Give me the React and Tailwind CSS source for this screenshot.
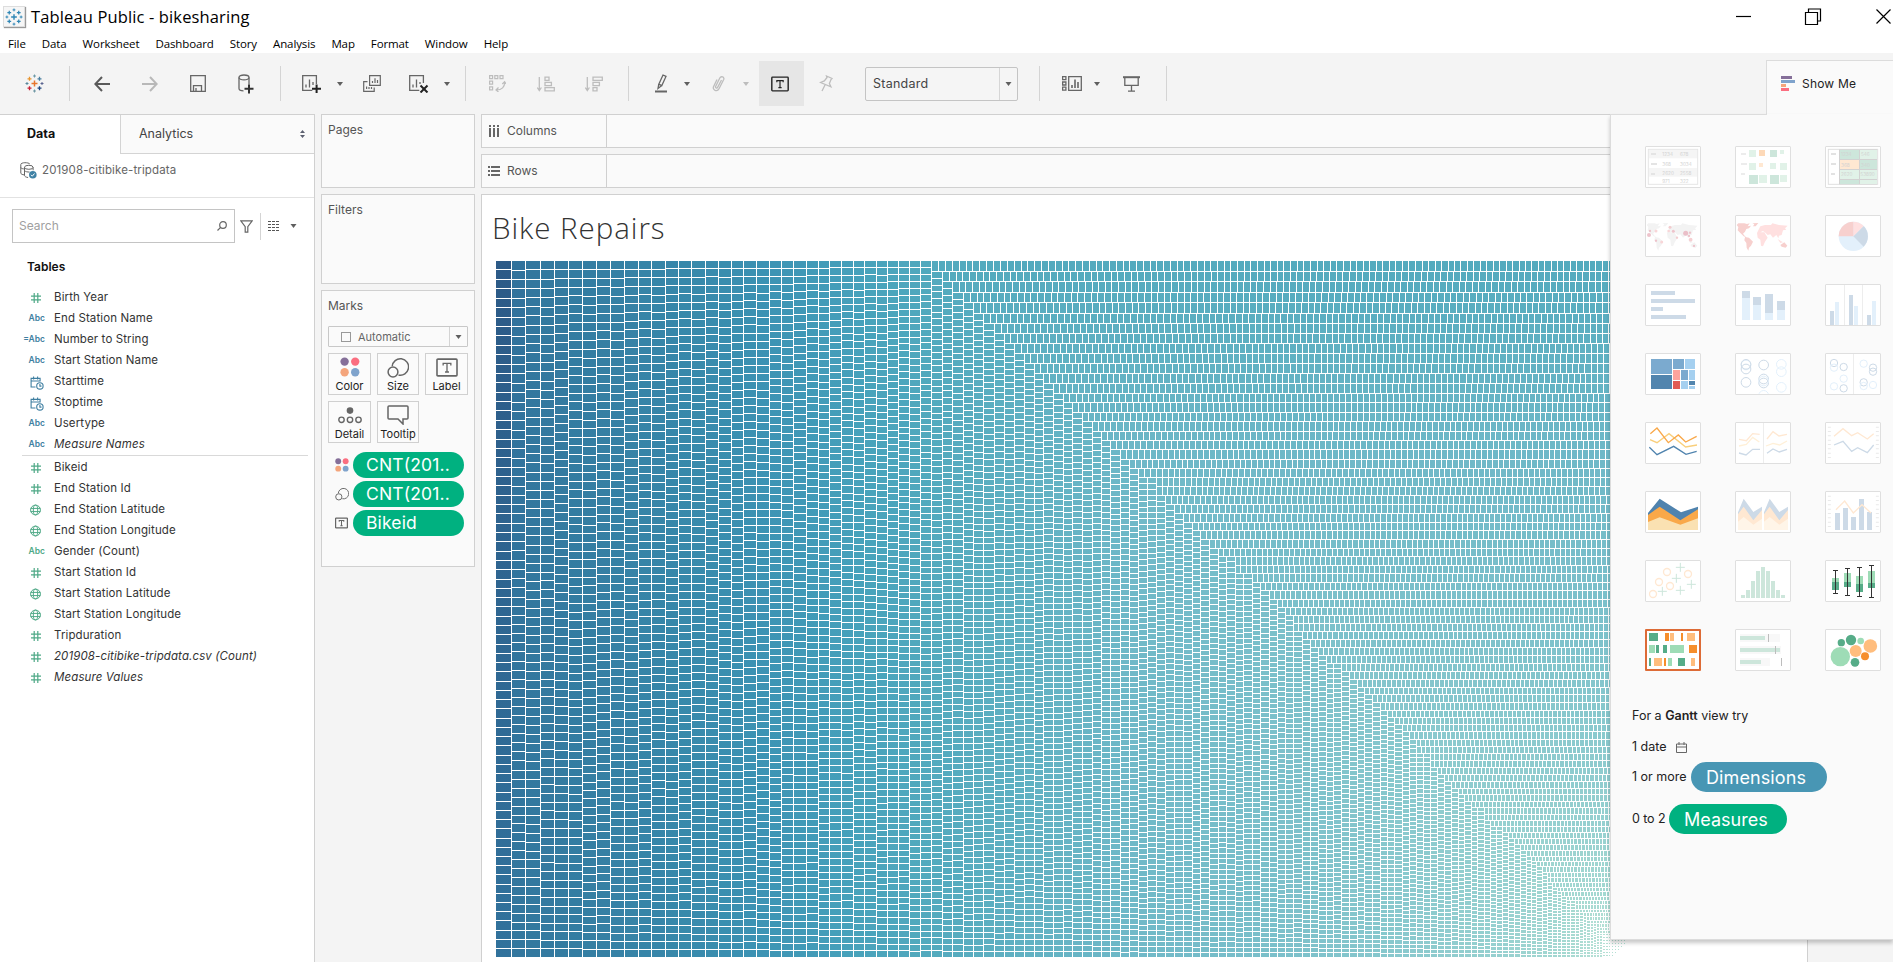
import React from 'react';

/* ---------- treemap ---------- */

const L = 496, T = 261, B = 958, R = 1628;

const fullColumns = [
  496, 512, 526, 541, 555, 569, 583, 597, 611, 625, 639, 652, 666, 679, 692, 706, 719, 732, 744, 757, 770, 782, 794,
  807, 819, 830, 842, 854, 865, 877, 888, 899, 910, 921,
];

// [left, top] of every column that starts below a row
const steps = [
  [932, 272], [943, 282], [953, 293], [964, 303], [974, 314], [984, 324], [995, 334], [1005, 344], [1015, 354],
  [1025, 364], [1035, 374], [1044, 384], [1054, 394], [1064, 403], [1073, 413], [1083, 422], [1093, 432], [1102, 441],
  [1111, 450], [1121, 460], [1130, 469], [1139, 478], [1148, 478], [1157, 496], [1166, 505], [1175, 514], [1184, 523],
  [1193, 531], [1201, 540], [1210, 549], [1219, 557], [1227, 557], [1236, 574], [1244, 574], [1253, 583], [1261, 591],
  [1270, 600], [1278, 608], [1286, 616], [1294, 632], [1303, 640], [1311, 648], [1319, 656], [1327, 664], [1334, 664],
  [1342, 672], [1350, 680], [1358, 688], [1365, 695], [1373, 703], [1381, 711], [1388, 718], [1395, 725], [1403, 732],
  [1410, 740], [1417, 754], [1424, 754], [1431, 768], [1438, 775], [1445, 782], [1452, 789], [1459, 795], [1465, 802],
  [1472, 808], [1478, 808], [1485, 821], [1491, 827], [1497, 827], [1503, 833], [1509, 839], [1515, 845], [1521, 851],
  [1527, 857], [1532, 862], [1537, 867], [1543, 873], [1548, 883], [1553, 888], [1558, 892], [1562, 897], [1567, 901],
  [1571, 901], [1576, 910], [1580, 913], [1584, 917], [1587, 921], [1591, 924], [1594, 924], [1597, 928], [1600, 931],
];

const rowTops = [
  261, 272, 282, 293, 303, 314, 324, 334, 344, 354, 364, 374, 384, 394, 403, 413, 422, 432, 441, 450, 460, 469, 478,
  487, 496, 505, 514, 523, 531, 540, 549, 557, 566, 574, 583, 591, 600, 608, 616, 624, 632, 640, 648, 656, 664, 672,
  680, 688, 695, 703, 711, 718, 725, 732, 740, 747, 754, 761, 768, 775, 782, 789, 795, 802, 808, 815, 821, 827, 833,
  839, 845, 851, 857, 862, 867, 873, 878, 883, 888, 892, 897, 901, 905, 910, 913, 917, 921, 924, 928, 931,
];

const ramp = [
  [496, 44, 90, 135], [512, 49, 114, 156], [526, 51, 119, 158], [570, 52, 124, 161], [680, 55, 136, 170],
  [760, 60, 146, 179], [860, 71, 162, 187], [935, 83, 170, 190], [1040, 98, 178, 195], [1140, 112, 185, 200],
  [1300, 125, 193, 203], [1420, 139, 202, 206], [1510, 152, 209, 208], [1570, 165, 217, 209], [1603, 183, 225, 214],
  [1700, 185, 226, 214],
];

// mean cell pitch along a strip, by the strip's starting position
const pitches = [
  [496, 9.25], [512, 9.15], [560, 8.75], [650, 8.3], [750, 7.85], [850, 7.1], [932, 6.65], [1000, 6.35], [1140, 5.65],
  [1250, 5.2], [1350, 4.75], [1450, 4.2], [1530, 3.5], [1570, 3], [1603, 2.6],
];

function at(table, x) {
  let i = 1;
  while (i < table.length - 1 && table[i][0] < x) i++;
  const a = table[i - 1], b = table[i];
  const f = Math.max(0, Math.min(1, (x - a[0]) / (b[0] - a[0])));
  return a.slice(1).map((v, k) => v + (b[k + 1] - v) * f);
}

function shade(x) {
  return `rgb(${at(ramp, x).map(Math.round).join(',')})`;
}

function cuts(start, end, pos, seed) {
  const len = end - start;
  const n = Math.max(1, Math.round(len / at(pitches, pos)[0]));
  const bow = 0.015 + 0.035 * ((seed * 0.618) % 1);
  const out = [];
  for (let i = 0; i <= n; i++) {
    const t = i / n;
    out.push(Math.round(start + len * (t + bow * t * (1 - t))));
  }
  return out;
}

function buildStrips() {
  const cols = [...fullColumns.map((x) => [x, T]), ...steps];
  const strips = [];
  cols.forEach(([x, top], i) => {
    const next = i < cols.length - 1 ? cols[i + 1][0] : 1603;
    const w = next - x;
    const c = cuts(top, B, x, i);
    let d = '';
    for (let k = 0; k < c.length - 1; k++) {
      const h = c[k + 1] - c[k] - 1;
      if (h > 0) d += `M${x} ${c[k]}h${w - 1}v${h}h${1 - w}z`;
    }
    strips.push({ id: `c${i}`, d, from: shade(x), to: shade(next), x1: 0, y1: top, x2: 0, y2: B });
  });
  rowTops.forEach((y, i) => {
    const next = i < rowTops.length - 1 ? rowTops[i + 1] : 934;
    const first = steps.find((s) => s[1] > y);
    const x = first ? first[0] : 1603;
    const h = next - y;
    const c = cuts(x, R, x, i + 3);
    let d = '';
    for (let k = 0; k < c.length - 1; k++) {
      const w = c[k + 1] - c[k] - 1;
      if (w > 0) d += `M${c[k]} ${y}h${w}v${h - 1}h${-w}z`;
    }
    strips.push({ id: `r${i}`, d, from: shade(x), to: shade(x + h), x1: x, y1: 0, x2: R, y2: 0 });
  });
  let dots = '';
  for (let x = 1603; x < 1627; x += 3) {
    for (let y = 934; y < 957; y += 3) {
      if (x - 1603 + (y - 934) < 32) dots += `M${x} ${y}h${x < 1609 ? 2 : 1}v1h${x < 1609 ? -2 : -1}z`;
    }
  }
  return { strips, dots };
}

const map = buildStrips();

function Treemap() {
  return (
    <svg width="1132" height="697" viewBox={`${L} ${T} 1132 697`} shapeRendering="crispEdges" className="block shrink-0">
      <defs>
        {map.strips.map((s) => (
          <linearGradient key={s.id} id={s.id} gradientUnits="userSpaceOnUse" x1={s.x1} y1={s.y1} x2={s.x2} y2={s.y2}>
            <stop offset="0" stopColor={s.from} />
            <stop offset="1" stopColor={s.to} />
          </linearGradient>
        ))}
      </defs>
      {map.strips.map((s) => (
        <path key={s.id} d={s.d} fill={`url(#${s.id})`} />
      ))}
      <path d={map.dots} fill="#b4e0d4" />
    </svg>
  );
}

/* ---------- icons ---------- */

function Svg({ w, h, children, className = '', stroke = '#666', sw = 1.3 }) {
  return (
    <svg width={w} height={h} viewBox={`0 0 ${w} ${h}`} fill="none" stroke={stroke} strokeWidth={sw} className={`block shrink-0 ${className}`}>
      {children}
    </svg>
  );
}

const plus = (x, y, r) => `M${x - r} ${y}h${2 * r}M${x} ${y - r}v${2 * r}`;

function Logo({ mono, size = 19 }) {
  const c = mono ? Array(8).fill('#2f86b5') : ['#e8952f', '#6c9aa8', '#4a7fa0', '#c72035', '#1f457e', '#5b6591', '#7199a6', '#59879b'];
  return (
    <svg width={size} height={size} viewBox="0 0 19 19" fill="none" strokeWidth="1.3" className="block shrink-0">
      <path d={plus(9.5, 9.5, 3)} stroke={mono ? '#2f86b5' : '#e8762d'} strokeWidth="1.5" />
      <path d={plus(4.5, 4.8, 2)} stroke={c[0]} />
      <path d={plus(14.5, 4.8, 2)} stroke={c[2]} />
      <path d={plus(4.5, 14.2, 2)} stroke={c[3]} />
      <path d={plus(14.5, 14.2, 2)} stroke={c[4]} />
      <path d={plus(9.5, 2, 1.5)} stroke={c[1]} strokeWidth="1" />
      <path d={plus(9.5, 17, 1.5)} stroke={c[6]} strokeWidth="1" />
      <path d={plus(2, 9.5, 1.5)} stroke={c[7]} strokeWidth="1" />
      <path d={plus(17, 9.5, 1.5)} stroke={c[5]} strokeWidth="1" />
    </svg>
  );
}

function Caret({ className = '', color = '#5f5f5f', w = 6, h = 4 }) {
  return (
    <svg width={w} height={h} viewBox="0 0 6 4" className={`block shrink-0 ${className}`}>
      <path d="M0 0h6L3 4z" fill={color} />
    </svg>
  );
}

function Sep({ className }) {
  return <div className={`h-[35px] w-px shrink-0 bg-[#d4d4d4] ${className}`} />;
}

function TGlyph({ w, h, color = '#555', sw = 1.3 }) {
  return (
    <svg width={w} height={h} viewBox="0 0 20 17" fill="none" stroke={color} strokeWidth={sw} className="block shrink-0">
      <rect x="0.9" y="0.9" width="18.2" height="15.2" rx="0.8" strokeWidth={sw * 1.2} />
      <path d="M6.5 6.6V4.7h7v1.9M10 4.7v8M8.2 12.6h3.6" />
    </svg>
  );
}

function SizeGlyph({ w, h }) {
  return (
    <svg width={w} height={h} viewBox="0 0 22 21" fill="none" stroke="#666" strokeWidth="1.5" className="block shrink-0">
      <path d="M5.2 9.3a8.2 8.2 0 1 1 6.3 8.6" />
      <circle cx="6" cy="15" r="4.9" />
    </svg>
  );
}

function ColorGlyph({ w, h }) {
  return (
    <svg width={w} height={h} viewBox="0 0 20 20" className="block shrink-0">
      <circle cx="4.6" cy="4.6" r="4.2" fill="#856f99" />
      <circle cx="15.2" cy="4.6" r="4.2" fill="#fb6e80" />
      <circle cx="4.6" cy="15.2" r="4.2" fill="#f4a57c" />
      <circle cx="15.2" cy="15.2" r="4.2" fill="#7fa3cc" />
    </svg>
  );
}

/* ---------- toolbar ---------- */

function Toolbar() {
  const off = '#bdbdbd';
  return (
    <div className="flex h-[61px] items-center bg-[#f4f4f4]">
      <div className="ml-[25px]"><Logo /></div>
      <Sep className="ml-[25px]" />
      <Svg w={16} h={16} className="ml-[24px]" sw={2} stroke="#5a5a5a"><path d="M16 8H1.5M8 1L1.3 8 8 15" /></Svg>
      <Svg w={16} h={16} className="ml-[32px]" sw={2} stroke="#b8b8b8"><path d="M0 8h14.5M8 1l6.7 7L8 15" /></Svg>
      <Svg w={16} h={17} className="ml-[32px]"><path d="M.7.7h14.6v15.6H.7zM3.5 16v-5.4h8V16M6 16v-3" /></Svg>
      <Svg w={16} h={20} className="ml-[32px]">
        <ellipse cx="6" cy="3.4" rx="5" ry="2.4" /><path d="M1 3.4v11.2c0 1.4 2 2.2 4.5 2.2M11 3.4v7.2" />
        <path d="M6.5 14.8h9M11 10.5v9" stroke="#333" strokeWidth="2" />
      </Svg>
      <Sep className="ml-[26px]" />
      <Svg w={20} h={18} className="ml-[21px]">
        <path d="M14.4 9V.7H.7v14.6h9.6M4 12.5V9.5M7.5 12.5V4.5M11 10V7" /><path d="M10 13.8h9M14.6 9.5v8.5" stroke="#222" strokeWidth="2" />
      </Svg>
      <Caret className="ml-[15px]" />
      <Svg w={18} h={18} className="ml-[20px]" sw={1.2}>
        <path d="M6.6.7h10.7v9.6H6.6zM9.5 8V6M12 8V3.2M14.5 8V5M4.5 6.6H.7v9.8h10.5v-4M3.6 14v-2.5M6 14v-2M8.5 14v-2" />
      </Svg>
      <Svg w={20} h={18} className="ml-[28px]">
        <path d="M14.4 8V.7H.7v14.6h9.6M4 12.5V9.5M7.5 12.5V4.5M11 9V7" /><path d="M11.5 10.5l7 7M18.5 10.5l-7 7" stroke="#222" strokeWidth="2" />
      </Svg>
      <Caret className="ml-[15px]" />
      <Sep className="ml-[15px]" />
      <Svg w={17} h={17} className="ml-[23px]" stroke={off} sw={1.2}>
        <path d="M.6.6h3v3h-3zM5.8.6h3v3h-3zM11 .6h3v3h-3zM.6 6.2h3v3h-3zM.6 11.8h3v3h-3zM15.6 7c.4 5-3 8-8 8M13.3 9l2.3-2.3L17 9M9.5 12.5L7 15l2.5 2" />
      </Svg>
      <Svg w={18} h={16} className="ml-[31px]" stroke={off}>
        <path d="M2.3 1v13M.2 11.5l2.1 3 2.1-3M8 1.2h4v3.2H8zM8 6.4h6.4v3.2H8zM8 11.6h9.3v3.2H8z" />
      </Svg>
      <Svg w={18} h={16} className="ml-[30px]" stroke={off}>
        <path d="M2.3 1v13M.2 11.5l2.1 3 2.1-3M8 1.2h9.3v3.2H8zM8 6.4h6.4v3.2H8zM8 11.6h4v3.2H8z" />
      </Svg>
      <Sep className="ml-[25px]" />
      <Svg w={12} h={19} className="ml-[26px]">
        <path d="M8 1l3 1.4-4.2 9.2-3-1.4zM3.8 10.2L3 14.5l3.8-2.9" /><path d="M0 17.5h12" strokeWidth="2" />
      </Svg>
      <Caret className="ml-[17px]" />
      <Svg w={14} h={17} className="ml-[21px]" stroke={off}>
        <path d="M10.5 5L6.6 12.4c-.7 1.4-2.6.4-2-1L8.8 3c1.2-2.4 5-1 3.9 1.6L8 13.8c-1.8 3.4-7 1.4-5.4-2.4L6 4.5" />
      </Svg>
      <Caret className="ml-[18px]" color={off} />
      <div className="ml-[10px] flex h-[45px] w-[45px] shrink-0 items-center justify-center bg-[#e6e6e6] pr-[3px]">
        <TGlyph w={18} h={16} color="#222" sw={1.3} />
      </div>
      <Svg w={15} h={17} className="ml-[15px]" stroke={off}>
        <path d="M7.5 1l5.5 2.4-1 1.2-1.6 4 1.5 3.2L1.5 7.5l3.8-1.6L8 2.5zM6 10l-3 6" />
      </Svg>
      <div className="ml-[31px] flex h-[34px] w-[153px] shrink-0 items-center rounded-[2px] border border-[#c4c4c4] bg-[#f5f5f5]">
        <span className="flex-1 pl-[7px] pt-[2px] text-[12.5px] tracking-[0.25px] text-[#444]">Standard</span>
        <div className="flex h-full w-[18px] items-center justify-center border-l border-[#d6d6d6]"><Caret w={7} /></div>
      </div>
      <Sep className="ml-[21px]" />
      <Svg w={20} h={15} className="ml-[22px]">
        <path d="M.6.6h3.3v3H.6zM.6 6h3.3v3H.6zM.6 11.2h3.3v3H.6zM6.7.7h12.6v13.6H6.7z" /><path d="M10 12V9M13 12V3.5M16 12V6" strokeWidth="1.6" />
      </Svg>
      <Caret className="ml-[12px]" />
      <Svg w={17} h={16} className="ml-[23px]">
        <path d="M0 1.2h17" strokeWidth="2" /><path d="M1.8 2v7.4h13.4V2M8.5 9.4V15M5 15.2h7" />
      </Svg>
      <Sep className="ml-[26px]" />
      <div className="flex-1" />
      <div className="mt-[7px] flex h-[54px] w-[127px] items-center border-l border-t border-[#dcdcdc] bg-[#fafafa] pb-[7px]">
        <svg width="14" height="16" viewBox="0 0 14 16" className="ml-[14px] block">
          <rect width="11" height="3" fill="#856f99" /><rect y="4" width="14" height="3" fill="#7fa3cc" />
          <rect y="8" width="5" height="3" fill="#f4a57c" /><rect y="12" width="8" height="3" fill="#fb6e80" />
        </svg>
        <span className="ml-[7px] text-[12px] tracking-[0.2px] text-[#222]">Show Me</span>
      </div>
    </div>
  );
}

/* ---------- data pane ---------- */

const dims = [
  ['#', 'Birth Year'], ['abc', 'End Station Name'], ['=abc', 'Number to String'], ['abc', 'Start Station Name'],
  ['time', 'Starttime'], ['time', 'Stoptime'], ['abc', 'Usertype'], ['abc', 'Measure Names', true],
];
const measures = [
  ['#', 'Bikeid'], ['#', 'End Station Id'], ['geo', 'End Station Latitude'], ['geo', 'End Station Longitude'],
  ['gabc', 'Gender (Count)'], ['#', 'Start Station Id'], ['geo', 'Start Station Latitude'], ['geo', 'Start Station Longitude'],
  ['#', 'Tripduration'], ['#', '201908-citibike-tripdata.csv (Count)', true], ['#', 'Measure Values', true],
];

function FieldIcon({ kind }) {
  if (kind === '#')
    return <Svg w={10} h={10} stroke="#4fa987" sw={1.2} className="mr-[4px]"><path d="M3.2 0v10M6.8 0v10M0 3.2h10M0 6.8h10" /></Svg>;
  if (kind === 'geo')
    return (
      <Svg w={11} h={12} stroke="#4fa987" sw={1} className="mr-[4px]">
        <circle cx="5.5" cy="6" r="4.9" /><ellipse cx="5.5" cy="6" rx="2.2" ry="4.9" /><path d="M.6 4.4h9.8M.6 7.6h9.8" />
      </Svg>
    );
  if (kind === 'time')
    return (
      <Svg w={14} h={14} stroke="#3f7fa1" sw={1.1} className="mr-px mt-[2px]">
        <path d="M5.5 11H1.1V2.4h9v3M1.1 5h9M3.6.5v3M7.6.5v3" /><circle cx="9.9" cy="9.9" r="3.2" /><path d="M9.9 8v2.1h1.6" />
      </Svg>
    );
  return (
    <span className={`text-[8.500px] font-semibold ${kind === 'gabc' ? 'text-[#4fa987]' : 'text-[#3f7fa1]'}`}>
      {kind === '=abc' ? '=Abc' : 'Abc'}
    </span>
  );
}

function Field({ kind, label, italic }) {
  return (
    <div className="flex h-[21px] items-center">
      <div className="flex w-[45px] justify-end">
        <FieldIcon kind={kind} />
      </div>
      <span className={`ml-[9px] whitespace-nowrap text-[11.5px] tracking-[0.11px] text-[#333] ${italic ? 'italic' : ''}`}>{label}</span>
    </div>
  );
}

function DataPane() {
  return (
    <div className="flex w-[315px] shrink-0 flex-col border-r border-t border-[#d0d0d0] bg-white">
      <div className="flex h-[39px]">
        <div className="flex w-[120px] items-center pl-[27px] text-[12.5px] font-bold text-[#111]">
          <span className="-mt-px">Data</span>
        </div>
        <div className="flex flex-1 items-center border-b border-l border-[#d4d4d4] bg-[#fafafa]">
          <span className="ml-[18px] pt-px text-[12.5px] text-[#444]">Analytics</span>
          <svg width="5" height="8" viewBox="0 0 5 8" className="ml-auto mr-[9px] block"><path d="M2.5 0L5 3H0zM2.5 8L0 5h5z" fill="#5c6070" /></svg>
        </div>
      </div>
      <div className="flex h-[44px] items-start border-b border-[#e2e2e2] pl-[20px] pt-[8px]">
        <svg width="17" height="17" viewBox="0 0 17 17" fill="none" stroke="#666" strokeWidth="1" className="block">
          <path d="M.8 2.5v8.5c0 1 1.5 1.7 3.4 1.9M.8 2.5C.8.2 8.6.2 9.8 2M.8 5.5c.5 1 1.6 1.3 3 1.4" />
          <ellipse cx="8.8" cy="5.3" rx="4.3" ry="2" /><path d="M4.5 5.3v8c0 1.2 1.6 2 3.6 2.2M13.1 5.3v3M4.5 8.5c1 1.3 3 1.6 5 1.5" />
          <circle cx="12.8" cy="12.8" r="3.8" fill="#3f82a5" stroke="none" /><path d="M11 12.8l1.3 1.4 2.2-2.7" stroke="#fff" />
        </svg>
        <span className="ml-[5px] text-[11.5px] tracking-[0.12px] text-[#666]">201908-citibike-tripdata</span>
      </div>
      <div className="mt-[11px] flex h-[34px] items-center">
        <div className="ml-[12px] flex h-[34px] w-[223px] items-center border border-[#c4c4c4]">
          <span className="ml-[6px] flex-1 text-[12px] text-[#a0a0a0]">Search</span>
          <Svg w={10} h={10} className="mr-[7px]" sw={1.2}><circle cx="6" cy="4" r="3.3" /><path d="M3.6 6.4L.5 9.5" /></Svg>
        </div>
        <Svg w={13} h={13} className="ml-[5px]" sw={1.2}><path d="M.8.9h11.4L7.8 6.6v5.6H5.2V6.6z" /></Svg>
        <div className="ml-[7px] h-[27px] w-px bg-[#d4d4d4]" />
        <Svg w={12} h={10} className="ml-[7px]" sw={1}><path d="M0 .5h12M0 3.5h12M0 6.500h12M0 9.500h12" strokeDasharray="3 1" stroke="#555" /></Svg>
        <Caret className="ml-[10px]" w={7} />
      </div>
      <div className="mt-[14px] pl-[27px] text-[12px] font-semibold leading-[20px] text-[#111]">Tables</div>
      <div className="mt-[10px]">
        {dims.map(([k, l, i]) => <Field key={l} kind={k} label={l} italic={i} />)}
      </div>
      <div className="ml-[22px] h-px w-[286px] bg-[#d9d9d9]" />
      <div className="mt-px">
        {measures.map(([k, l, i]) => <Field key={l} kind={k} label={l} italic={i} />)}
      </div>
    </div>
  );
}

/* ---------- cards ---------- */

function MarkButton({ label, children }) {
  return (
    <div className="flex h-[42px] flex-col items-center border border-[#d0d0d0] bg-[#fbfbfb]">
      <div className="flex h-[26px] items-center">{children}</div>
      <span className="text-[11px] leading-[13px] text-[#222]">{label}</span>
    </div>
  );
}

function Pill({ icon, label }) {
  return (
    <div className="flex h-[26px] items-center">
      <div className="flex w-[18px] items-center">{icon}</div>
      <div className="flex h-[26px] w-[111px] items-center rounded-full bg-[#00b180] pl-[13px] pt-px text-[17.5px] tracking-[0.15px] text-white">{label}</div>
    </div>
  );
}

function Cards() {
  return (
    <div className="ml-[6px] flex w-[154px] shrink-0 flex-col gap-[6px] text-[12px] text-[#555]">
      <div className="h-[74px] border border-[#d0d0d0] bg-[#fafafa] pl-[6px] pt-[6px]">Pages</div>
      <div className="h-[90px] border border-[#d0d0d0] bg-[#fafafa] pl-[6px] pt-[6px]">Filters</div>
      <div className="h-[277px] border border-[#d0d0d0] bg-[#fafafa] pl-[6px] pt-[6px]">
        <div className="h-[29px]">Marks</div>
        <div className="flex h-[21px] w-[140px] items-center rounded-[1px] border border-[#c8c8c8]">
          <div className="ml-[12px] h-[10px] w-[10px] border border-[#999]" />
          <span className="ml-[7px] flex-1 pt-px text-[11px] text-[#666]">Automatic</span>
          <div className="flex h-full w-[18px] items-center justify-center border-l border-[#d4d4d4]"><Caret w={7} /></div>
        </div>
        <div className="mt-[6px] grid w-[140px] grid-cols-[43px_42px_43px] gap-[6px]">
          <MarkButton label="Color"><ColorGlyph w={20} h={20} /></MarkButton>
          <MarkButton label="Size"><SizeGlyph w={22} h={21} /></MarkButton>
          <MarkButton label="Label"><TGlyph w={22} h={19} color="#666" sw={1.2} /></MarkButton>
          <MarkButton label="Detail">
            <svg width="24" height="17" viewBox="0 0 24 17" fill="none" stroke="#666" strokeWidth="1.4" className="block">
              <circle cx="12" cy="3.6" r="3.3" fill="#666" stroke="none" /><circle cx="3.5" cy="12.8" r="2.7" /><circle cx="12" cy="12.8" r="2.7" /><circle cx="20.5" cy="12.8" r="2.7" />
            </svg>
          </MarkButton>
          <MarkButton label="Tooltip">
            <Svg w={22} h={20} sw={1.5}><path d="M2 1h18a1 1 0 0 1 1 1v11a1 1 0 0 1-1 1h-4v5l-5-5H2a1 1 0 0 1-1-1V2a1 1 0 0 1 1-1z" /></Svg>
          </MarkButton>
        </div>
        <div className="mt-[9px] flex flex-col gap-[3px] pl-[7px]">
          <Pill icon={<ColorGlyph w={14} h={14} />} label="CNT(201.." />
          <Pill icon={<SizeGlyph w={14} h={14} />} label="CNT(201.." />
          <Pill icon={<TGlyph w={13} h={12} color="#666" sw={1.6} />} label="Bikeid" />
        </div>
      </div>
    </div>
  );
}

function Shelf({ label, icon }) {
  return (
    <div className="flex h-[34px] border border-r-0 border-[#d0d0d0] bg-[#fafafa]">
      <div className="flex w-[125px] items-center border-r border-[#d0d0d0] pl-[6px]">
        {icon}
        <span className="ml-[7px] text-[12px] text-[#555]">{label}</span>
      </div>
    </div>
  );
}

/* ---------- chart type thumbnails, drawn on a 168 x 126 grid ---------- */

const rects = (list) => list.map(([x, y, w, h, f], i) => <rect key={i} x={x} y={y} width={w} height={h} fill={f} />);
const rings = (list, r, sw = 3) => list.map(([x, y, c], i) => <circle key={i} cx={x} cy={y} r={r} fill="none" stroke={c} strokeWidth={sw} />);
const discs = (list) => list.map(([x, y, r, c], i) => <circle key={i} cx={x} cy={y} r={r} fill={c} />);
const line = (points, stroke, w = 4) => <polyline points={points} fill="none" stroke={stroke} strokeWidth={w} />;
const words = (list) => list.map(([x, y, t], i) => <text key={i} x={x} y={y} fontSize="14" fill="#d2d2d2">{t}</text>);

const b1 = '#cddae7', b2 = '#e3f0fb', g1 = '#cde6db', g2 = '#e1f2e8', o1 = '#fdd9b8', o2 = '#ffe8d2';

const americas = 'M5 30L10 25 28 25 36 27 44 25 38 34 48 32 42 40 34 42 30 50 24 56 30 64 36 68 26 64 16 54 8 46 10 36zM52 25L70 24 62 34 54 34 58 28zM30 66L42 68 54 80 48 92 42 98 40 107 35 98 34 84 28 76zM136 90L148 82 157 92 152 98 140 95z';
const oldWorld = 'M66 54L70 46 76 34 90 30 108 30 112 25 132 30 158 32 150 40 154 44 144 46 140 60 132 62 130 70 124 60 114 68 106 58 98 60 92 54 84 48 76 52 88 52 98 68 90 80 84 94 78 92 76 74 68 68zM128 72L144 82 136 84z';

const thumbs = [
  <g>
    <rect x="10" y="10" width="148" height="105" fill="#fff" stroke="#e6e6e6" strokeWidth="3" />
    {rects([[12, 12, 144, 25, '#f5f5f5'], [12, 66, 144, 26, '#f5f5f5'], [18, 21, 15, 6, '#e4e4e4'], [18, 51, 18, 6, '#e4e4e4'], [18, 81, 12, 6, '#e4e4e4']])}
    {words([[52, 31, '1234'], [105, 31, '678'], [52, 59, '368'], [105, 59, '3034'], [52, 86, '2620'], [105, 86, '2558'], [52, 110, '971'], [105, 110, '322']])}
  </g>,
  <g>{rects([[18, 21, 15, 6, '#ececec'], [18, 51, 18, 6, '#ececec'], [18, 81, 12, 6, '#ececec'], [42, 12, 21, 21, g2], [72, 12, 18, 18, o1], [105, 12, 21, 21, g1], [135, 12, 12, 12, g2], [42, 51, 21, 21, g2], [72, 51, 12, 12, o2], [105, 51, 18, 18, g2], [135, 51, 21, 21, g2], [42, 87, 27, 27, g1], [72, 87, 24, 24, g2], [105, 87, 27, 27, g1], [135, 87, 21, 21, g2]])}</g>,
  <g>
    <rect x="10" y="10" width="148" height="105" fill="#fff" stroke="#e0e0e0" strokeWidth="3" />
    {rects([[18, 21, 15, 6, '#e2e2e2'], [18, 51, 15, 6, '#e2e2e2'], [18, 81, 12, 6, '#e2e2e2'], [42, 10, 114, 105, '#d2d2d2'], [45, 12, 57, 27, g1], [105, 12, 51, 27, g2], [45, 42, 57, 27, o2], [105, 42, 51, 27, g1], [45, 72, 57, 27, g2], [105, 72, 51, 27, g2], [45, 102, 57, 12, g1], [105, 102, 51, 12, g2]])}
    {words([[48, 31, '1234'], [108, 31, '546'], [48, 62, '368'], [108, 62, '340'], [48, 91, '2620'], [106, 91, '53890']])}
  </g>,
  <g>
    <path d={americas} fill="#f3f3f3" /><path d={oldWorld} fill="#f3f3f3" />
    {discs([[12, 60, 6, '#eec3cb'], [15, 48, 3.5, '#eec3cb'], [33, 48, 4.5, '#f8d6d8'], [33, 77, 3.5, '#eec3cb'], [50, 81, 4.5, '#f8d6d8'], [71, 48, 4, '#f8d6d8'], [75, 37, 4.5, '#f3cccf'], [85, 49, 4.5, '#eec3cb'], [96, 68, 3.5, '#f3cccf'], [122, 55, 7.5, '#eabfc8'], [132, 63, 3.5, '#eec3cb'], [135, 53, 3.5, '#eec3cb'], [137, 74, 5.5, '#f6cfd2'], [147, 93, 3.5, '#eec3cb']])}
  </g>,
  <g><path d={oldWorld} fill="#ffe0e0" /><path d={americas} fill="#f7d0ce" /></g>,
  <g>
    <circle cx="85" cy="64" r="44" fill={b2} /><path d="M85 64L116 33A44 44 0 0 1 116 95z" fill={b1} /><path d="M85 64V20A44 44 0 0 1 116 33z" fill="#ffe0e0" /><path d="M85 64H41A44 44 0 0 1 85 20z" fill="#f7d0ce" />
  </g>,
  <g>{rects([[18, 21, 72, 12, b1], [18, 45, 132, 12, b1], [18, 69, 36, 12, b1], [18, 93, 105, 12, b1]])}</g>,
  <g>{rects([[21, 21, 24, 21, b1], [21, 42, 24, 66, b2], [54, 39, 24, 24, b1], [54, 63, 24, 45, b2], [90, 30, 24, 57, b1], [90, 87, 24, 21, b2], [126, 51, 24, 27, b1], [126, 78, 24, 30, b2]])}</g>,
  <g>{rects([[57, 0, 3, 126, '#ededed'], [111, 0, 3, 126, '#ededed'], [15, 81, 12, 45, b1], [30, 54, 12, 72, b2], [72, 33, 12, 93, b1], [87, 66, 12, 60, b2], [126, 93, 12, 33, b1], [141, 51, 12, 75, b2]])}</g>,
  <g>{rects([[18, 18, 63, 45, '#7baacf'], [18, 66, 63, 42, '#5285ae'], [84, 18, 33, 30, '#7baacf'], [120, 18, 30, 30, '#a5d0f0'], [84, 51, 21, 30, '#ffa39d'], [108, 51, 21, 30, '#7baacf'], [132, 51, 18, 30, '#a5d0f0'], [84, 84, 21, 24, '#e15c55'], [108, 84, 21, 24, '#a5d0f0'], [132, 84, 18, 12, '#5285ae'], [132, 99, 18, 9, '#a5d0f0']])}</g>,
  <g>{rings([[33, 36, b2], [33, 48, b1], [33, 88, b1], [86, 36, b1], [86, 78, b1], [86, 90, b1], [86, 127, b2], [139, 34, b2], [139, 56, b2], [139, 103, b2], [33, 34, b1], [86, 84, b2]], 14.5)}</g>,
  <g>
    <rect x="84" width="3" height="126" fill="#ededed" />
    {rings([[27, 30, b1], [27, 44, b2], [56, 42, b1], [56, 77, b2], [27, 100, b2], [56, 106, b1], [116, 32, b2], [144, 44, b1], [144, 56, b1], [116, 88, b1], [116, 99, b2], [144, 96, b2]], 11)}
  </g>,
  <g>{line('15,53 36,62 72,35 122,75 156,69', '#f9cf7c')}{line('16,35 36,18 70,62 100,39 122,60 155,43', '#f9a849')}{line('13,76 36,98 86,73 123,97 155,88', '#4f83ae')}</g>,
  <g>
    <rect x="84" width="3" height="126" fill="#ededed" />
    {line('12,52 34,56 53,35 74,37', o2)}{line('12,72 34,67 53,46 73,60', '#fff0d8')}{line('12,93 33,99 53,82 75,82', b1)}
    {line('96,51 114,29 132,42 156,37', o2)}{line('93,72 114,64 134,69 156,57', '#fff0d8')}{line('96,94 114,81 133,90 156,82', b1)}
  </g>,
  <g>{line('27,43 54,20 80,41 98,32 127,51 146,35', o2)}{line('27,69 54,58 80,88 98,77 127,92 146,69', b1)}<path d="M13 14V112M157 14V112" stroke="#e9e9e9" strokeWidth="9" strokeDasharray="3 10" /></g>,
  <g><path d="M9 66L44 23 108 64 159 47V117H9z" fill="#4f83ae" /><path d="M9 72L44 47 106 88 159 55V117H9z" fill="#f9a849" /><path d="M9 93L44 79 106 101 159 82V117H9z" fill="#fae1b2" /></g>,
  <g>{[0, 78].map((x) => (
    <g key={x} transform={`translate(${x} 0)`}><path d="M9 64L26 23 55 63 81 47V117H9z" fill={b1} /><path d="M9 70L26 47 55 88 81 57V117H9z" fill={o2} /><path d="M9 92L26 78 55 101 81 83V117H9z" fill="#fff5e8" /></g>
  ))}<rect x="81" y="0" width="6" height="126" fill="#fff" /></g>,
  <g>{rects([[30, 66, 15, 51, b1], [54, 51, 15, 66, b1], [78, 78, 15, 39, b1], [102, 24, 15, 93, b1], [126, 63, 15, 54, b1]])}{line('33,56 59,30 85,66 111,41 138,66', o2)}<path d="M13 14V112M157 14V112" stroke="#e9e9e9" strokeWidth="9" strokeDasharray="3 10" /></g>,
  <g>{rings([[24, 102, o2], [42, 66, o2], [66, 36, o2], [75, 78, o2], [129, 42, o2]], 10.5, 4)}<path d={[[52, 94], [94, 55], [106, 22], [106, 91], [139, 73]].map(([x, y]) => plus(x, y, 13.5)).join('')} stroke={g1} strokeWidth="3" /></g>,
  <g>{rects([[18, 105, 12, 9, g1], [33, 90, 12, 24, g1], [48, 63, 12, 51, g1], [63, 33, 12, 81, g1], [78, 21, 12, 93, g1], [93, 33, 12, 81, g1], [108, 63, 12, 51, g1], [123, 90, 12, 24, g1], [138, 105, 12, 9, g1]])}</g>,
  <g>
    {rects([[21, 54, 21, 12, '#9edcb6'], [21, 66, 21, 24, '#56ac88'], [57, 39, 21, 27, '#9edcb6'], [57, 66, 21, 15, '#56ac88'], [93, 48, 21, 24, '#9edcb6'], [93, 72, 21, 24, '#56ac88'], [129, 33, 21, 36, '#9edcb6'], [129, 69, 21, 15, '#56ac88']])}
    <path d="M24 31.5h15M31.5 31v69M24 100.500h15M60 25.500h15M67.500 25v81M60 106.500h15M96 22.500h15M103.500 22v87M96 109.500h15M132 16.500h15M139.500 16v97M132 112.500h15" stroke="#333" strokeWidth="3" />
  </g>,
  <g>{rects([[12, 12, 27, 24, '#56ac88'], [60, 12, 12, 24, '#f68e2c'], [75, 12, 12, 24, '#ffbd7d'], [108, 12, 6, 24, '#f68e2c'], [126, 12, 24, 24, '#ffbd7d'], [12, 48, 18, 24, '#9edcb6'], [33, 48, 9, 24, '#56ac88'], [54, 48, 12, 24, '#56ac88'], [75, 48, 42, 24, '#9edcb6'], [132, 48, 24, 24, '#f68e2c'], [12, 87, 6, 24, '#56ac88'], [27, 87, 24, 24, '#ffbd7d'], [57, 87, 6, 24, '#f68e2c'], [69, 87, 12, 24, '#9edcb6'], [99, 87, 21, 24, '#56ac88'], [138, 87, 12, 24, '#ffbd7d']])}</g>,
  <g>{rects([[15, 15, 120, 24, '#f8f8f8'], [15, 51, 123, 24, '#f8f8f8'], [15, 87, 90, 24, '#f8f8f8'], [15, 21, 75, 12, g1], [15, 57, 120, 12, g1], [15, 93, 63, 12, g1], [99, 15, 3, 24, '#bdbdbd'], [120, 51, 3, 24, '#bdbdbd'], [138, 87, 3, 24, '#bdbdbd']])}</g>,
  <g>{discs([[46, 83, 29, '#9edcb6'], [49, 41, 11, '#56ac88'], [78, 33, 15.5, '#56ac88'], [107, 36, 10, '#9edcb6'], [92, 66, 18, '#ffbd7d'], [136, 51, 20.5, '#ffbd7d'], [120, 82, 12, '#f68e2c'], [90, 100, 13, '#56ac88']])}</g>,
];

function ShowMe() {
  return (
    <div className="absolute left-[1610px] top-[114px] flex h-[826px] w-[283px] flex-col border-b border-l border-[#dcdcdc] bg-[#fafafa] shadow-[0_3px_4px_rgba(0,0,0,0.22)]">
      <div className="h-px w-[156px] bg-[#dcdcdc]" />
      <div className="ml-[34px] mt-[31px] grid grid-cols-[repeat(3,56px)] gap-x-[34px] gap-y-[27px]">
        {thumbs.map((t, i) => (
          <div key={i} className={`h-[42px] w-[56px] overflow-hidden rounded-[1px] bg-white ${i === 21 ? 'outline-2 -outline-offset-2 outline-[#dd6b36]' : 'outline outline-1 -outline-offset-1 outline-[#dfdfdf]'}`}>
            <svg width="56" height="42" viewBox="0 0 168 126" className="block">{t}</svg>
          </div>
        ))}
      </div>
      <div className="ml-[21px] mt-[35px] flex flex-col text-[12.5px] text-[#222]">
        <div className="h-[20px] leading-[20px]">For a <b className="font-semibold">Gantt</b> view try</div>
        <div className="mt-[11px] flex h-[20px] items-center">
          1 date
          <Svg w={11} h={11} className="ml-[9px]" sw={1}><path d="M.5 2h10v8.5H.5zM.5 5h10M3 0v3M8 0v3" /></Svg>
        </div>
        <div className="mt-[5px] flex h-[30px] items-center">
          <span className="w-[59px] whitespace-nowrap">1 or more</span>
          <div className="flex h-[30px] w-[136px] items-center rounded-full bg-[#4896b4] pl-[15px] text-[18px] tracking-[0.1px] text-white">Dimensions</div>
        </div>
        <div className="mt-[12px] flex h-[30px] items-center">
          <span className="w-[37px] whitespace-nowrap tracking-[-0.1px]">0 to 2</span>
          <div className="flex h-[30px] w-[118px] items-center rounded-full bg-[#00b180] pl-[15px] text-[18px] text-white">Measures</div>
        </div>
      </div>
    </div>
  );
}

/* ---------- page ---------- */

const menu = ['File', 'Data', 'Worksheet', 'Dashboard', 'Story', 'Analysis', 'Map', 'Format', 'Window', 'Help'];

export default function App() {
  return (
    <div className="relative flex h-[962px] w-[1893px] flex-col overflow-hidden bg-[#f4f4f4] font-['Inter','Liberation_Sans',sans-serif]">
      <div className="flex h-[33px] items-center bg-white font-['Open_Sans','Noto_Sans',sans-serif]">
        <div className="ml-[3px] flex h-[21px] w-[22px] items-center justify-center border border-[#ddd] bg-[#f6f6f6] shadow-[1px_1px_1px_#999]"><Logo mono size={18} /></div>
        <span className="ml-[6px] pt-px text-[16.5px] tracking-[0.13px] text-black">Tableau Public - bikesharing</span>
        <svg width="160" height="20" viewBox="0 0 160 20" fill="none" stroke="#000" strokeWidth="1.2" className="ml-auto block">
          <path d="M3 9.5h15" /><path d="M72.5 5.5h12v12h-12zM75.5 5v-3h12v12h-3" /><path d="M143.5 2.5l14 14M157.5 2.5l-14 14" />
        </svg>
      </div>
      <div className="flex h-[20px] items-center gap-[16px] bg-white pl-[8px] pt-px font-['Open_Sans','Noto_Sans',sans-serif] text-[11.5px] tracking-[-0.11px] text-black">
        {menu.map((m) => <span key={m}>{m}</span>)}
      </div>
      <Toolbar />
      <div className="flex h-[848px]">
        <DataPane />
        <Cards />
        <div className="ml-[6px] flex min-w-0 flex-1 flex-col gap-[6px]">
          <Shelf label="Columns" icon={<Svg w={12} h={12} sw={2}><path d="M2 0v12M6 0v12M10 0v12" strokeDasharray="2 1 9" /></Svg>} />
          <Shelf label="Rows" icon={<Svg w={12} h={12} sw={2}><path d="M0 2h12M0 6h12M0 10h12" strokeDasharray="2 1 9" /></Svg>} />
          <div className="flex h-[768px]">
            <div className="w-[1327px] shrink-0 overflow-hidden border-l border-r border-t border-[#d0d0d0] bg-white pl-[14px]">
              <div className="-ml-[4px] flex h-[66px] items-center font-['Open_Sans',sans-serif] text-[29.5px] font-light tracking-[0.95px] text-[#333]">Bike Repairs</div>
              <Treemap />
            </div>
          </div>
        </div>
      </div>
      <ShowMe />
    </div>
  );
}
